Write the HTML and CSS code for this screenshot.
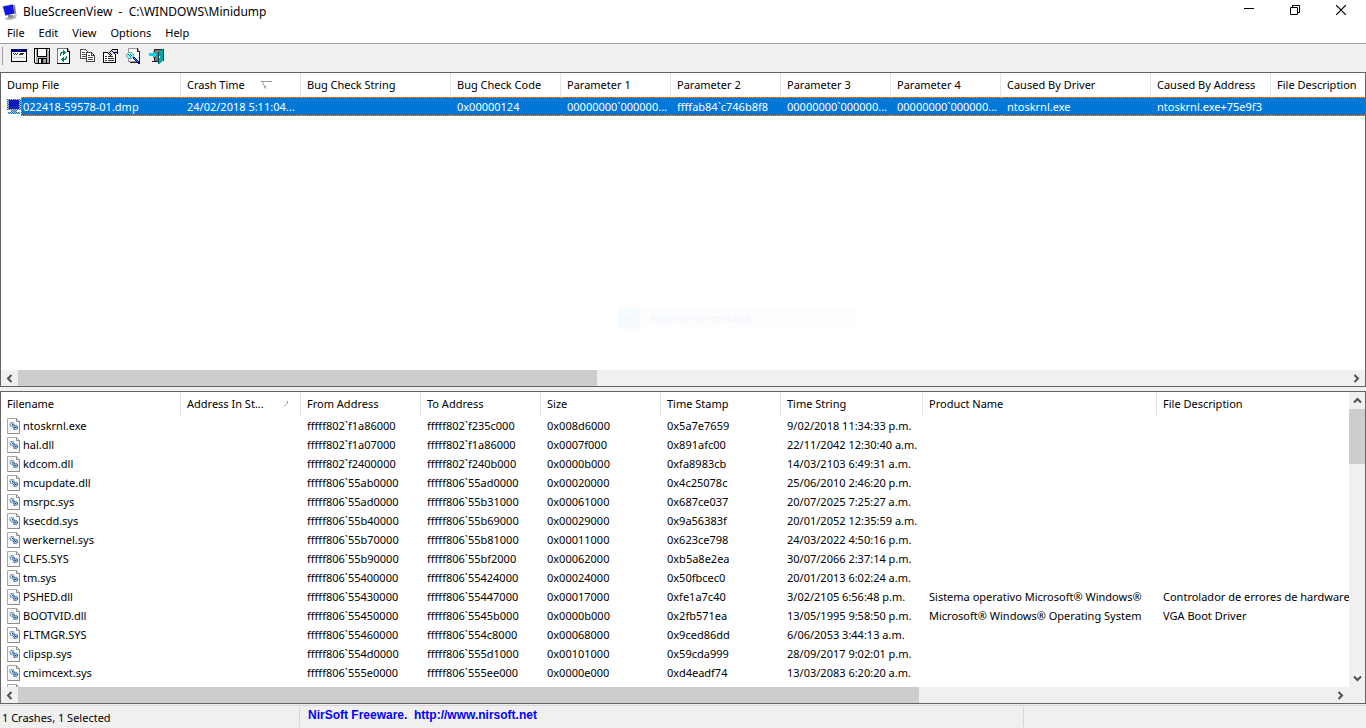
FILE: index.html
```
<!DOCTYPE html>
<html lang="en">
<head>
<meta charset="utf-8">
<title>BlueScreenView</title>
<link rel="stylesheet" href="styles.css">
</head>
<body>
<svg class="defs" width="0" height="0" aria-hidden="true">
  <symbol id="file" viewBox="0 0 14 16">
    <path d="M.5.5h9l3 3v12H.5z" fill="#f8f8f8" stroke="#a8a8a8"/>
    <path d="M9.500.5v3h3v12H.5" fill="none" stroke="#8c8c8c"/>
    <circle cx="5" cy="6.500" r="1.900" fill="#e8f0f8" stroke="#4474a8" stroke-width="1.200" stroke-dasharray="1.200 .5"/>
    <circle cx="8.500" cy="9.500" r="2" fill="#a8c4e0" stroke="#2c5f98" stroke-width="1.200" stroke-dasharray="1.200 .5"/>
    <path d="M5 6h1v1H5zM8 9h1v1H8z" fill="#174778"/>
  </symbol>
  <symbol id="left" viewBox="0 0 7 9"><path d="M5.500 1 2 4.500 5.500 8" fill="none" stroke="#505050" stroke-width="2"/></symbol>
  <symbol id="right" viewBox="0 0 7 9"><path d="M1.500 1 5 4.500 1.500 8" fill="none" stroke="#505050" stroke-width="2"/></symbol>
  <symbol id="up" viewBox="0 0 9 7"><path d="M1 5.500 4.500 2 8 5.500" fill="none" stroke="#505050" stroke-width="2"/></symbol>
  <symbol id="down" viewBox="0 0 9 7"><path d="M1 1.500 4.500 5 8 1.500" fill="none" stroke="#505050" stroke-width="2"/></symbol>
</svg>
<div class="window">
  <header class="titlebar">
    <svg class="app-icon" width="16" height="16" viewBox="0 0 16 16">
      <path d="M10 12 15 10l-1 4-5 2H4l-1-2z" fill="#b9b9b9"/>
      <path d="M6 11h5v3H6z" fill="#8d8d8d"/>
      <path d="M0 2 10 0l3 9-10 3z" fill="#c8ccd8"/>
      <path d="M1 2.500 11 .5l1.500 9-9 2z" fill="#1414e0"/>
      <path d="M11 .5l2 1 1 8-1.500 1z" fill="#777"/>
    </svg>
    <h1 class="title">BlueScreenView &nbsp;- &nbsp;C:\WINDOWS\Minidump</h1>
    <div class="caption-buttons">
      <button class="caption-button" aria-label="Minimize"><svg width="10" height="10"><path d="M0 3.500h10" stroke="#000"/></svg></button>
      <button class="caption-button" aria-label="Restore"><svg width="10" height="10"><path d="M.5 2.500h7v7h-7zM2.500 2V.5h7v7H8" fill="none" stroke="#000"/></svg></button>
      <button class="caption-button" aria-label="Close"><svg width="10" height="10"><path d="m0 0 10 10M10 0 0 10" stroke="#000" stroke-width="1.200"/></svg></button>
    </div>
  </header>
  <nav class="menubar">
    <button class="menu">File</button><button class="menu">Edit</button><button class="menu">View</button><button class="menu">Options</button><button class="menu">Help</button>
  </nav>
  <div class="toolbar">
    <button class="tool" aria-label="Advanced options"><svg width="16" height="16" shape-rendering="crispEdges">
      <path d="M.5 1.500h15v12H.5z" fill="#f4f4f4" stroke="#000"/><path d="M0 1h15v3H0z" fill="#000080"/>
      <path d="M2 5h1v1H2zM4 5h1v1H4zM6 5h1v1H6zM3 6h1v1H3zM5 6h1v1H5zM9 5h4v1H9zM8 6h4v1H8z" fill="#333"/><path d="M2 9h12v1H2z" fill="#c8c8c8"/></svg></button>
    <button class="tool" aria-label="Save"><svg width="16" height="16" shape-rendering="crispEdges">
      <path d="M.5.5h15v15h-14l-1-1z" fill="#b0b0b0" stroke="#000"/><path d="M3.500.5h9v8h-9z" fill="#fff" stroke="#000"/><path d="M14 1h1v2h-1zM1 1h1v13H1z" fill="#fff"/>
      <path d="M4 10h9v5H4z" fill="#000"/><path d="M5 11h2v4H5z" fill="#fff"/><path d="M9 11h3v4H9z" fill="#999"/></svg></button>
    <button class="tool" aria-label="Refresh"><svg width="16" height="16" shape-rendering="crispEdges">
      <path d="M.5.500h10l2 3v12H.5z" fill="#fff" stroke="#777"/><path d="M10.500 0v3.500H13M12.500 3v12.500H0" fill="none" stroke="#000"/>
      <path d="M3 5h1v3H3zM4 4h3v1H4zM4 5h1v1H4zM6 2h1v5H6zM7 3h1v3H7zM8 4h1v1H8zM9 8h1v3H9zM8 10h1v2H8zM6 11h2v1H6zM6 9h1v5H6zM5 10h1v3H5zM4 11h1v1H4z" fill="#008040"/></svg></button>
    <button class="tool" aria-label="Copy"><svg width="16" height="16" shape-rendering="crispEdges">
      <path d="M.5 1.500h5l3 3v6h-8z" fill="#fff" stroke="#555"/><path d="M2 4h3v1H2zM2 6h4v1H2zM2 8h4v1H2z" fill="#555"/>
      <path d="M6.500 4.500h5l3 3v6h-8z" fill="#fff" stroke="#444"/><path d="M11.500 4v3.500H15" fill="none" stroke="#444"/><path d="M8 7h2v1H8zM8 9h5v1H8zM8 11h5v1H8z" fill="#444"/></svg></button>
    <button class="tool" aria-label="Properties"><svg width="16" height="16" shape-rendering="crispEdges">
      <path d="M.5 4.500h12v10H.5z" fill="#fff" stroke="#000"/><path d="M2 8h2v1H2zM5 8h5v1H5zM2 10h2v1H2zM5 10h6v1H5zM2 12h2v1H2zM5 12h6v1H5z" fill="#333"/>
      <path d="M3 5 9 1h5v5h-3L8 8z" fill="#ddd"/><path d="M4 4h1v1H4zM6 4h1v1H6zM5 5h1v1H5zM7 5h1v1H7zM6 6h1v1H6zM8 6h1v1H8zM7 7h1v1H7zM7 3h1v1H7zM8 2h1v1H8zM9 1h5v1H9zM9 3h1v1H9zM10 4h1v1h-1zM11 5h1v1h-1z" fill="#000"/><path d="M14 1h1v5h-1V5h-3V4h3z" fill="#000080"/></svg></button>
    <button class="tool" aria-label="Find"><svg width="16" height="16" shape-rendering="crispEdges">
      <path d="M2.500.5h9l2 3v10h-11z" fill="#fff" stroke="#999"/><path d="M11.500 0v3.500H14M13.500 3v11H4" fill="none" stroke="#222"/>
      <path d="M2 4h4v1h1v1h1v3H7v1H6v1H2v-1H1V9H0V6h1V5h1z" fill="#999"/><path d="M2 5h4v1h1v3H6v1H2V9H1V6h1z" fill="#8ff"/><path d="M2 6h1v1H2zM4 6h1v1H4zM3 7h1v1H3zM5 7h1v1H5zM4 8h1v1H4z" fill="#089"/>
      <path d="M7 9h2v1h1v1h1v1h1v1h1v1h1v2h-2v-1h-1v-1h-1v-1H9v-1H8v-1H7z" fill="#000090"/><path d="M8 10h1v1h1v1h1v1h1v1h-1v-1h-1v-1H9v-1H8z" fill="#39f"/></svg></button>
    <button class="tool" aria-label="Exit"><svg width="16" height="16" shape-rendering="crispEdges">
      <path d="M5 1h9v12H5z" fill="#777"/><path d="M5 1h9v1H5zM5 1h1v3H5zM5 9h1v4H5zM3 13h7v1H3z" fill="#222"/>
      <path d="M9 4 14 1v11l-4 4H9z" fill="#0aa5a5"/><path d="M14 1h1v12h-1zM9 4h1v11H9z" fill="#045"/><path d="M10 8h1v2h-1z" fill="#fff"/>
      <path d="M0 5h4V3h1v1h1v1h1v1h1v1H7v1H6v1H5v1H4V8H0z" fill="#00d5e5"/></svg></button>
  </div>
  <main class="panes">
    <section class="pane">
      <div class="list">
        <table class="grid">
          <colgroup><col class="w180"><col class="w120"><col class="w150"><col class="w110"><col class="w110"><col class="w110"><col class="w110"><col class="w110"><col class="w150"><col class="w120"><col></colgroup>
          <thead><tr><th>Dump File</th><th><span class="sorted">Crash Time <svg width="11" height="8"><path d="M0 .5h11M1.500 1l3 6.500V5" fill="none" stroke="#999"/></svg></span></th><th>Bug Check String</th><th>Bug Check Code</th><th>Parameter 1</th><th>Parameter 2</th><th>Parameter 3</th><th>Parameter 4</th><th>Caused By Driver</th><th>Caused By Address</th><th>File Description</th></tr></thead>
          <tbody><tr class="selected"><td><span class="name"><svg class="dump-icon" width="14" height="15" shape-rendering="crispEdges">
            <defs><pattern id="dither" width="2" height="2" patternUnits="userSpaceOnUse"><path d="M0 0h1v1H0zM1 1h1v1H1z" fill="#0078d7"/></pattern></defs>
            <path d="M0 0h14v11H0zM4 11h6v2H4zM1 13h12v2H1z" fill="#c4c4bc"/><path d="M0 0h14v11H0zM4 11h6v2H4zM1 13h12v2H1z" fill="url(#dither)"/><path d="M2 1h10v9H2z" fill="#0000b8"/><path d="M2 1h10v9H2z" fill="url(#dither)" opacity=".4"/></svg><span class="label">022418-59578-01.dmp</span></span></td><td>24/02/2018 5:11:04...</td><td></td><td>0x00000124</td><td>00000000`000000...</td><td>ffffab84`c746b8f8</td><td>00000000`000000...</td><td>00000000`000000...</td><td>ntoskrnl.exe</td><td>ntoskrnl.exe+75e9f3</td><td></td></tr></tbody>
        </table>
        <div class="ghost"><span class="ghost-mark">●</span><span>Recorte de ventana</span></div>
      </div>
      <div class="hscroll">
        <button class="arrow" aria-label="Scroll left"><svg width="7" height="9"><use href="#left"/></svg></button>
        <div class="track"><div class="thumb thumb-top"></div></div>
        <button class="arrow" aria-label="Scroll right"><svg width="7" height="9"><use href="#right"/></svg></button>
      </div>
    </section>
    <section class="pane pane-modules">
      <div class="list">
        <table class="grid">
          <colgroup><col class="w180"><col class="w120"><col class="w120"><col class="w120"><col class="w120"><col class="w120"><col class="w142"><col class="w234"><col></colgroup>
          <thead><tr><th>Filename</th><th><span class="sorted">Address In St... <svg width="5" height="6"><path d="M4.500 0v2L1 5.500" fill="none" stroke="#999"/></svg></span></th><th>From Address</th><th>To Address</th><th>Size</th><th>Time Stamp</th><th>Time String</th><th>Product Name</th><th>File Description</th></tr></thead>
          <tbody id="modules"></tbody>
        </table>
      </div>
      <div class="vscroll">
        <button class="arrow" aria-label="Scroll up"><svg width="9" height="7"><use href="#up"/></svg></button>
        <div class="track"><div class="thumb thumb-side"></div></div>
        <button class="arrow" aria-label="Scroll down"><svg width="9" height="7"><use href="#down"/></svg></button>
      </div>
      <div class="hscroll">
        <button class="arrow" aria-label="Scroll left"><svg width="7" height="9"><use href="#left"/></svg></button>
        <div class="track"><div class="thumb thumb-bottom"></div></div>
        <button class="arrow" aria-label="Scroll right"><svg width="7" height="9"><use href="#right"/></svg></button>
      </div>
      <div class="corner"></div>
    </section>
  </main>
  <footer class="statusbar">
    <span class="status count">1 Crashes, 1 Selected</span>
    <span class="status credit"><a href="http://www.nirsoft.net">NirSoft Freeware. &nbsp;http://www.nirsoft.net</a></span>
    <span class="status"></span>
  </footer>
</div>
<script src="modules.js"></script>
</body>
</html>
```
FILE: modules.js
```
const modules = [
  ["ntoskrnl.exe", "fffff802`f1a86000", "fffff802`f235c000", "0x008d6000", "0x5a7e7659", "9/02/2018 11:34:33 p.m."],
  ["hal.dll", "fffff802`f1a07000", "fffff802`f1a86000", "0x0007f000", "0x891afc00", "22/11/2042 12:30:40 a.m."],
  ["kdcom.dll", "fffff802`f2400000", "fffff802`f240b000", "0x0000b000", "0xfa8983cb", "14/03/2103 6:49:31 a.m."],
  ["mcupdate.dll", "fffff806`55ab0000", "fffff806`55ad0000", "0x00020000", "0x4c25078c", "25/06/2010 2:46:20 p.m."],
  ["msrpc.sys", "fffff806`55ad0000", "fffff806`55b31000", "0x00061000", "0x687ce037", "20/07/2025 7:25:27 a.m."],
  ["ksecdd.sys", "fffff806`55b40000", "fffff806`55b69000", "0x00029000", "0x9a56383f", "20/01/2052 12:35:59 a.m."],
  ["werkernel.sys", "fffff806`55b70000", "fffff806`55b81000", "0x00011000", "0x623ce798", "24/03/2022 4:50:16 p.m."],
  ["CLFS.SYS", "fffff806`55b90000", "fffff806`55bf2000", "0x00062000", "0xb5a8e2ea", "30/07/2066 2:37:14 p.m."],
  ["tm.sys", "fffff806`55400000", "fffff806`55424000", "0x00024000", "0x50fbcec0", "20/01/2013 6:02:24 a.m."],
  ["PSHED.dll", "fffff806`55430000", "fffff806`55447000", "0x00017000", "0xfe1a7c40", "3/02/2105 6:56:48 p.m.", "Sistema operativo Microsoft® Windows®", "Controlador de errores de hardware"],
  ["BOOTVID.dll", "fffff806`55450000", "fffff806`5545b000", "0x0000b000", "0x2fb571ea", "13/05/1995 9:58:50 p.m.", "Microsoft® Windows® Operating System", "VGA Boot Driver"],
  ["FLTMGR.SYS", "fffff806`55460000", "fffff806`554c8000", "0x00068000", "0x9ced86dd", "6/06/2053 3:44:13 a.m."],
  ["clipsp.sys", "fffff806`554d0000", "fffff806`555d1000", "0x00101000", "0x59cda999", "28/09/2017 9:02:01 p.m."],
  ["cmimcext.sys", "fffff806`555e0000", "fffff806`555ee000", "0x0000e000", "0xd4eadf74", "13/03/2083 6:20:20 a.m."],
  ["", "", "", "", "", ""]
];
const fileIcon = '<svg class="file-icon" width="14" height="16"><use href="#file"/></svg>';
document.getElementById("modules").innerHTML = modules.map(([name, from, to, size, stamp, time, product = "", description = ""]) =>
  `<tr><td><span class="name">${fileIcon}<span class="label">${name}</span></span></td><td></td>` +
  [from, to, size, stamp, time, product, description].map(text => `<td>${text}</td>`).join("") + "</tr>"
).join("");
```
FILE: styles.css
```
* { box-sizing: border-box; }
body {
  margin: 0;
  background: #f0f0f0;
  color: #000;
  font: 11px/18px "Noto Sans", "Open Sans", sans-serif;
}
button {
  margin: 0;
  padding: 0;
  border: 0;
  background: none;
  color: inherit;
  font: inherit;
}
svg { display: block; }
.defs { position: absolute; }
.window {
  display: flex;
  flex-direction: column;
  height: 100vh;
}
.titlebar {
  display: flex;
  align-items: center;
  height: 23px;
  padding-left: 2px;
  background: #fff;
}
.title {
  flex: 1;
  margin: 0 0 0 5px;
  font-size: 12px;
  font-weight: 400;
}
.caption-buttons {
  display: flex;
  align-self: flex-start;
  margin-right: 2px;
}
.caption-button {
  display: grid;
  place-items: center;
  width: 46px;
  height: 20px;
}
.menubar {
  display: flex;
  height: 21px;
  gap: 14px;
  padding-left: 7px;
  background: #fff;
  border-bottom: 1px solid #a0a0a0;
}
.toolbar {
  display: flex;
  align-items: center;
  gap: 7px;
  height: 28px;
  padding-bottom: 4px;
}
.toolbar::before {
  content: "";
  width: 1px;
  height: 18px;
  margin: 0 1px 0 2px;
  background: #a0a0a0;
}
.panes {
  flex: 1;
  display: grid;
  grid-template-rows: 315fr 313fr;
  gap: 4px;
  min-height: 0;
}
.pane {
  display: grid;
  grid-template-columns: minmax(0, 1fr);
  grid-template-rows: minmax(0, 1fr) 16px;
  border: 1px solid #646464;
  background: #fff;
  min-height: 0;
}
.pane-modules { grid-template-columns: minmax(0, 1fr) 16px; }
.list {
  position: relative;
  overflow: hidden;
}
.grid {
  width: 100%;
  table-layout: fixed;
  border-collapse: separate;
  border-spacing: 0;
}
.w110 { width: 110px; }
.w120 { width: 120px; }
.w142 { width: 142px; }
.w150 { width: 150px; }
.w180 { width: 180px; }
.w234 { width: 234px; }
th, td {
  padding: 0 0 0 6px;
  overflow: hidden;
  white-space: nowrap;
  text-align: left;
  font-weight: 400;
}
th {
  height: 24px;
  border-right: 1px solid #e5e5e5;
}
th:last-child { border-right: 0; }
td { height: 19px; }
.sorted {
  display: flex;
  align-items: center;
  justify-content: space-between;
  padding-right: 12px;
}
.pane:first-child .sorted { padding-right: 28px; }
.name {
  display: flex;
  align-items: center;
  height: 19px;
}
.label { padding-left: 2px; }
.selected td {
  background: #0078d7;
  color: #fff;
  border-top: 1px dotted #ff8728;
  border-bottom: 1px dotted #ff8728;
  line-height: 17px;
}
.selected td:first-child {
  padding: 0;
  background: #fff;
  border: 0;
}
.selected .name { padding-left: 6px; }
.selected .label {
  flex: 1;
  height: 19px;
  line-height: 17px;
  padding-left: 1px;
  background: #0078d7;
  border: 1px dotted #ff8728;
  border-right: 0;
}
.ghost {
  position: absolute;
  top: 234px;
  left: 617px;
  display: flex;
  gap: 10px;
  width: 239px;
  height: 22px;
  line-height: 22px;
  background: #fbfdff;
  color: #f5f6f8;
}
.ghost-mark {
  width: 22px;
  background: #f5fbff;
  text-align: center;
}
.hscroll, .vscroll {
  display: flex;
  background: #f0f0f0;
}
.vscroll { flex-direction: column; }
.arrow {
  display: grid;
  place-items: center;
  flex: 0 0 17px;
}
.track { flex: 1; }
.thumb { background: #cdcdcd; height: 100%; }
.thumb-top { width: 43.500%; }
.thumb-bottom { width: 68.600%; }
.thumb-side { height: 21%; }
.corner { background: #f0f0f0; }
.statusbar {
  display: grid;
  grid-template-columns: 300px 724px 1fr;
  height: 23px;
  margin-top: 1px;
  border-top: 1px solid #d7d7d7;
}
.status {
  margin-top: 1px;
  height: 20px;
  border-right: 1px solid #d7d7d7;
}
.status:last-child { border-right: 0; }
.count { padding: 2px 0 0 2px; }
.credit { padding-left: 8px; }
.credit a {
  display: block;
  color: #00f;
  font: bold 12px/17px "Liberation Sans", Arial, sans-serif;
  text-decoration: none;
}
```
